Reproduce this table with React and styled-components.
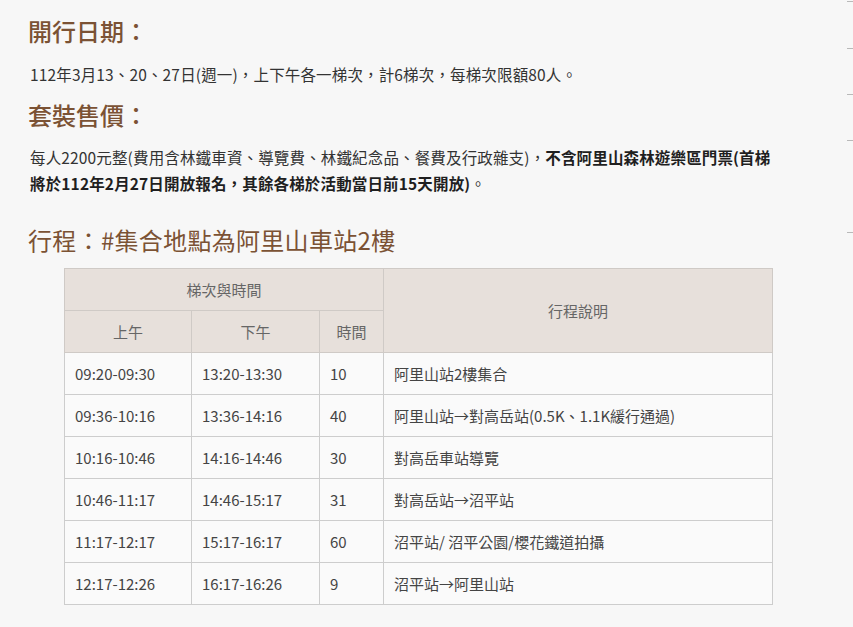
import React from 'react';
import styled, { createGlobalStyle } from 'styled-components';

const GlobalStyle = createGlobalStyle`
  html, body {
    margin: 0;
    padding: 0;
    background: #f7f7f7;
  }
  body {
    font-family: "Noto Sans CJK TC", "Noto Sans", sans-serif;
    color: #333;
  }
`;

// STYLE COMPONENTS
const Page = styled.main`
  display: flex;
  flex-direction: column;
  width: 755px;
  padding: 13px 0 0 28px;
`;

const Heading = styled.h2`
  margin: ${props => props.top || 0}px 0 0 0;
  font-size: 24px;
  line-height: 36px;
  font-weight: ${props => props.light ? 400 : 500};
  color: #7b5234;
  letter-spacing: ${props => props.light ? '0.3px' : '0'};
`;

const Text = styled.p`
  margin: ${props => props.top || 0}px 0 0 2px;
  font-size: 15.5px;
  line-height: 26px;
  letter-spacing: 0.15px;
  color: #333;
`;

const Strong = styled.strong`
  font-weight: 700;
  color: #1f1f1f;
`;

const Table = styled.table`
  margin: 10px 0 0 36px;
  width: 709px;
  border-collapse: collapse;
  table-layout: fixed;
  font-size: 15px;
`;

const HeadCell = styled.th`
  height: 41px;
  padding: 0;
  background: #e7e0db;
  border: 1px solid #cfcac6;
  font-weight: 400;
  color: #666;
  text-align: center;
  vertical-align: middle;
`;

const Cell = styled.td`
  height: 41px;
  padding: 0 10px;
  background: #fafafa;
  border: 1px solid #cdcdcd;
  color: #444;
  white-space: nowrap;
`;

const Rail = styled.div`
  position: fixed;
  top: 0;
  right: 0;
  width: 6px;
  height: 240px;
`;

const Tick = styled.span`
  position: absolute;
  left: 0;
  top: ${props => props.y}px;
  width: 6px;
  height: 1px;
  background: #b9b9b9;
`;

const rows = [
  ['09:20-09:30', '13:20-13:30', '10', '阿里山站2樓集合'],
  ['09:36-10:16', '13:36-14:16', '40', '阿里山站→對高岳站(0.5K、1.1K緩行通過)'],
  ['10:16-10:46', '14:16-14:46', '30', '對高岳車站導覽'],
  ['10:46-11:17', '14:46-15:17', '31', '對高岳站→沼平站'],
  ['11:17-12:17', '15:17-16:17', '60', '沼平站/ 沼平公園/櫻花鐵道拍攝'],
  ['12:17-12:26', '16:17-16:26', '9', '沼平站→阿里山站'],
];

export default function App() {
  return (
    <>
      <GlobalStyle />
      <Page>
        <Heading>開行日期：</Heading>
        <Text top={12}>112年3月13、20、27日(週一)，上下午各一梯次，計6梯次，每梯次限額80人。</Text>
        <Heading top={10}>套裝售價：</Heading>
        <Text top={11}>
          每人2200元整(費用含林鐵車資、導覽費、林鐵紀念品、餐費及行政雜支)，
          <Strong>不含阿里山森林遊樂區門票(首梯將於112年2月27日開放報名，其餘各梯於活動當日前15天開放)</Strong>。
        </Text>
        <Heading top={26} light>行程：#集合地點為阿里山車站2樓</Heading>
        <Table>
          <colgroup>
            <col style={{ width: 127 }} />
            <col style={{ width: 128 }} />
            <col style={{ width: 64 }} />
            <col />
          </colgroup>
          <thead>
            <tr>
              <HeadCell colSpan={3}>梯次與時間</HeadCell>
              <HeadCell rowSpan={2}>行程說明</HeadCell>
            </tr>
            <tr>
              <HeadCell>上午</HeadCell>
              <HeadCell>下午</HeadCell>
              <HeadCell>時間</HeadCell>
            </tr>
          </thead>
          <tbody>
            {rows.map((row, idx) => (
              <tr key={'row-' + idx}>
                {row.map((value, i) => (
                  <Cell key={'cell-' + idx + '-' + i}>{value}</Cell>
                ))}
              </tr>
            ))}
          </tbody>
        </Table>
      </Page>
      <Rail>
        {[1, 48, 94, 140, 232].map(y => <Tick key={y} y={y} />)}
      </Rail>
    </>
  );
}
